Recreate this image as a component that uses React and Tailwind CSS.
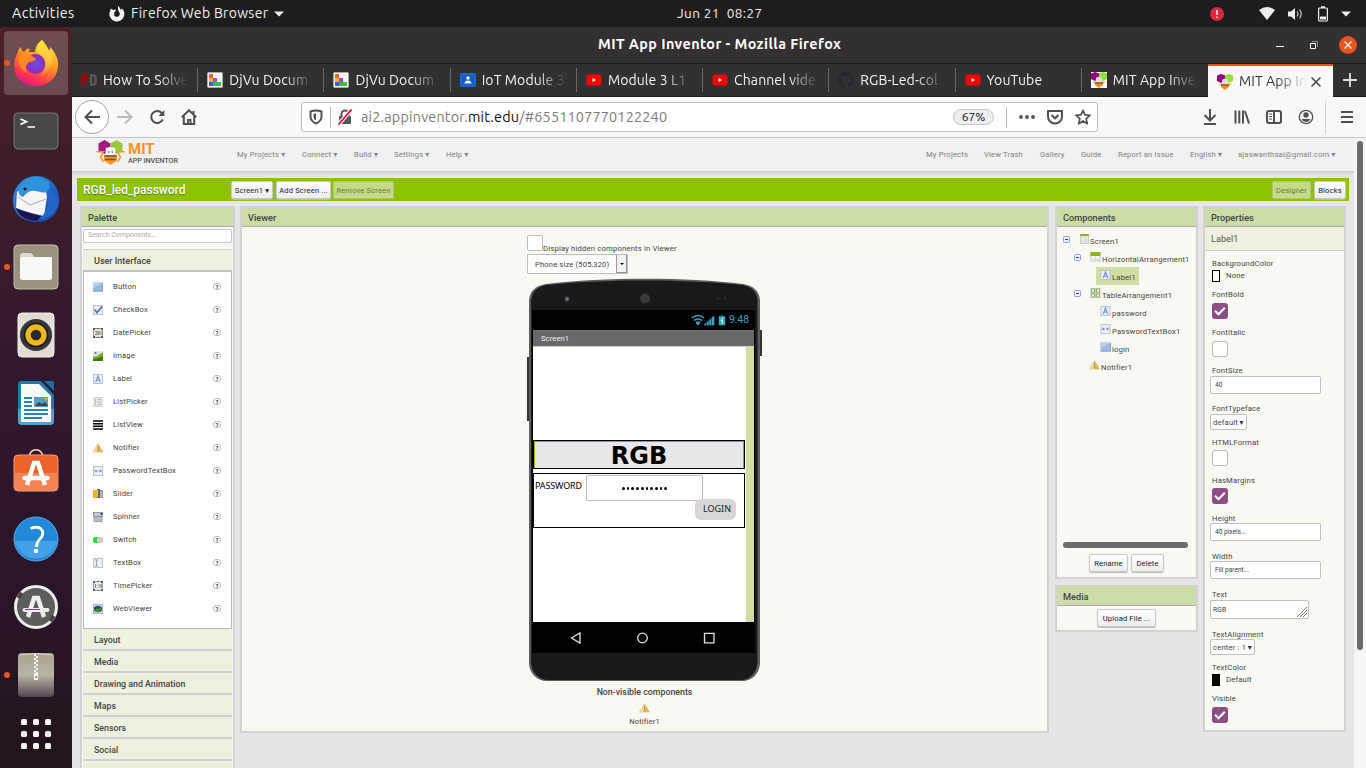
import React from "react";

const menuL = [["My Projects ▾", "w-[65px]"], ["Connect ▾", "w-[52px]"], ["Build ▾", "w-[40px]"], ["Settings ▾", "w-[52px]"], ["Help ▾", "w-[40px]"]];
const menuR = [["My Projects", "w-[58px]"], ["View Trash", "w-[56px]"], ["Gallery", "w-[41px]"], ["Guide", "w-[37px]"], ["Report an Issue", "w-[72px]"], ["English ▾", "w-[48px]"], ["ajaswanthsai@gmail.com ▾", "w-[111px]"]];

const tabs = [
  ["pd", "How To Solve"], ["dj", "DjVu Docum"], ["dj", "DjVu Docum"], ["iot", "IoT Module 3"], ["yt", "Module 3 L1"],
  ["yt", "Channel vide"], ["gh", "RGB-Led-col"], ["yt", "YouTube"], ["bee", "MIT App Inve"], ["bee", "MIT App In"],
];

const palette = ["Button", "CheckBox", "DatePicker", "Image", "Label", "ListPicker", "ListView", "Notifier", "PasswordTextBox", "Slider", "Spinner", "Switch", "TextBox", "TimePicker", "WebViewer"];
const categories = ["Layout", "Media", "Drawing and Animation", "Maps", "Sensors", "Social"];

function Bee({ className }) {
  return (
    <svg viewBox="0 0 28 25" className={className}>
      <path d="M2 3.500 8 0l6 3.500v7L8 14l-6-3.500z" fill="#a3177f" />
      <path d="M14 3.500 20 0l6 3.500v7L20 14l-6-3.500z" fill="#97c93d" />
      <path d="M0 11.800h7l-3 5.500 3 4.700M28 11.800h-7l3 5.500-3 4.700" fill="none" stroke="#f7931e" strokeWidth="1.500" />
      <circle cx="14" cy="12" r="5" fill="#fff" />
      <circle cx="10.500" cy="9" r="1.500" fill="#fff" />
      <circle cx="17.500" cy="9" r="1.500" fill="#fff" />
      <path d="M7.500 15h13v5.500L14 25l-6.500-4.500z" fill="#f7931e" />
      <path d="M8 16h12M8.500 19.500h11" stroke="#6b5a48" strokeWidth="1.500" />
      <circle cx="12.300" cy="12" r=".8" fill="#444" /><circle cx="15.700" cy="12" r=".8" fill="#444" />
    </svg>
  );
}

function TabIcon({ k }) {
  const c = "w-4 h-4 shrink-0";
  if (k === "bee") return (
    <svg className={c} viewBox="0 0 16 16">
      <path fill="#fff" d="M0 0h16v16H0z" />
      <path d="M0 1.500 4 0l4 1.500V7L4 9 0 7z" fill="#960082" /><path d="M8 1.500 12 0l4 1.500V7l-4 2-4-2z" fill="#8fe03c" />
      <path d="M1 9.500h14l-4 3H5z" fill="#f0a860" /><circle cx="8" cy="8" r="3.200" fill="#ddd" />
      <path d="M4 10h8v3l-4 3-4-3z" fill="#ff8c1a" /><path d="M4 11h8" stroke="#a86a38" strokeWidth="2" />
    </svg>
  );
  if (k === "yt") return (
    <svg className={c} viewBox="0 0 16 16"><rect x=".5" y="2.500" width="15" height="11" rx="2.500" fill="#f00" /><path d="M6.500 6v4l3.500-2z" fill="#fff" /></svg>
  );
  if (k === "dj") return (
    <svg className={c} viewBox="0 0 16 16">
      <rect x=".5" y=".5" width="15" height="15" rx="1" fill="#f4f4f4" stroke="#aaa" />
      <path d="M2 2h4v4H2z" fill="#f0672b" /><path d="M2 6h4v4H2z" fill="#f5b021" /><path d="M6 6h4v4H6z" fill="#c13bd0" />
      <path d="M2 10h4v4H2z" fill="#4455e0" /><path d="M6 10h4v4H6z" fill="#2fc04a" /><path d="M10 10h4v4h-4z" fill="#36c04e" /><path d="M10 6.500h0" />
    </svg>
  );
  if (k === "iot") return (
    <svg className={c} viewBox="0 0 16 16"><rect y="1" width="16" height="14" rx="1" fill="#1967d2" /><path d="M2.500 3h11v10h-11z" fill="#1b5cc0" /><circle cx="8" cy="6" r="1.700" fill="#fff" /><path d="M4.500 11.500c0-4 7-4 7 0z" fill="#fff" /></svg>
  );
  if (k === "gh") return (
    <svg className={c} viewBox="0 0 16 16"><path fill="#24292e" d="M8 0C3.580 0 0 3.580 0 8c0 3.540 2.290 6.530 5.470 7.590.4.070.55-.17.55-.38v-1.500c-2.200.5-2.700-1-2.700-1-.4-.9-.9-1.200-.9-1.200-.7-.5.1-.5.1-.5.800.1 1.200.800 1.200.800.700 1.300 1.900.900 2.300.700.1-.5.300-.900.5-1.100-1.800-.2-3.600-.900-3.600-4 0-.900.300-1.600.800-2.100-.1-.2-.4-1 .1-2.100 0 0 .700-.2 2.200.800a7.600 7.600 0 0 1 4 0c1.500-1 2.200-.800 2.200-.800.4 1.100.2 1.900.1 2.100.5.600.800 1.300.800 2.100 0 3.100-1.900 3.800-3.700 4 .3.200.6.700.6 1.500v2.200c0 .2.100.5.600.4A8 8 0 0 0 8 0z" /></svg>
  );
  return (
    <svg className={c} viewBox="0 0 16 16" fill="none">
      <path d="M1.800 14V3.500h2q2 0 2 2t-2 3h-2" stroke="#a80000" strokeWidth="2.800" />
      <path d="M10 12.500v-9h1.500q3 0 3 2v5q0 2-3 2z" stroke="#5c5858" strokeWidth="2.600" />
    </svg>
  );
}

function CompIcon({ k, className = "w-[10px] h-[10px]" }) {
  const frame = <rect x=".5" y=".5" width="9" height="9" fill="#eceff4" stroke="#bfc4cc" />;
  const shapes = {
    Button: <><rect y=".5" width="10" height="9" fill="#9dbbe2" /><path d="M0 .5h10L0 6z" fill="#bcd0ec" /><path d="M0 9h10V1" fill="none" stroke="#7d9cc6" /></>,
    CheckBox: <>{frame}<path d="M1.500 4.500 4 7.500 9 1.500" fill="none" stroke="#4f79bd" strokeWidth="1.900" /></>,
    DatePicker: <><rect x=".5" y=".5" width="9" height="9" fill="#e8e2dc" stroke="#9a938c" /><path d="M0 0h2v2H0zM8 0h2v2H8zM0 8h2v2H0zM8 8h2v2H8zM4 0h2v1H4zM4 9h2v1H4z" fill="#5f5953" /><path d="M2 3.500h2v3H2M5 3.500h1v3H5zM8 3v4" fill="none" stroke="#8a8580" /></>,
    Image: <><rect width="10" height="10" fill="#dfe6e0" /><path d="M0 6 4 5l6-4v9H0z" fill="#76b01c" /><path d="M0 8l5-1 5-2v5H0z" fill="#3f7c10" /><circle cx="2.500" cy="2" r="1" fill="#667" /></>,
    Label: <>{frame}<path d="M2.800 8 5 2l2.200 6M3.500 6h3" fill="none" stroke="#6f98da" strokeWidth="1.200" /></>,
    ListPicker: <><rect x="1" y=".5" width="8" height="9" fill="#eee" stroke="#ccc" /><path d="M2.500 2v6" stroke="#b9d77a" strokeWidth="1.300" /><path d="M4.500 2.500h3.500M4.500 5h3.500M4.500 7.500h3.500" stroke="#b0b0b0" /></>,
    ListView: <path d="M0 1h10M0 3.700h10M0 6.300h10M0 9h10" stroke="#000" strokeWidth="1.600" />,
    Notifier: <><path d="M5 .7 9.800 9H.2z" fill="#f0b34c" stroke="#c9a56a" strokeWidth=".6" /><path d="M5 .7 4 9H.2z" fill="#ead9b4" /><path d="M5 3.500v3M5 7v1" stroke="#a87a24" strokeWidth=".8" /></>,
    PasswordTextBox: <>{frame}<path d="M1.500 5h3M5.700 5h3M3 3.700v2.600M7.200 3.700v2.600" stroke="#6a8fd0" /></>,
    Slider: <><path d="M0 1h4v8H0z" fill="#f4b400" /><path d="M4 0h3v9H4z" fill="#666" /><path d="M7 1h3v8H7z" fill="#999" /><path d="M4.500 1v7M8 2v6" stroke="#ddd" strokeWidth=".8" /></>,
    Spinner: <><rect x=".3" y=".5" width="9.400" height="3.800" fill="#c3c8d2" stroke="#6d7482" strokeWidth=".6" /><path d="M7 1h3L8.500 3.500z" fill="#1b3f8f" /><rect x="1" y="4.800" width="8" height="4.700" fill="#b9c0ca" stroke="#777" strokeWidth=".6" /></>,
    Switch: <><rect y="2" width="9" height="6" rx="2.500" fill="#0eea0e" /><circle cx="7" cy="5" r="3.200" fill="#ccc" /></>,
    TextBox: <>{frame}<path d="M2 2h3M2 8h3M3.500 2v6" stroke="#8f9cb4" strokeWidth=".9" /></>,
    TimePicker: <><rect x=".5" y=".5" width="9" height="9" fill="#e6eaec" stroke="#9aa0a4" /><path d="M0 0h2v2H0zM8 0h2v2H8zM0 8h2v2H0zM8 8h2v2H8zM4 0h2v1H4zM4 9h2v1H4z" fill="#5f656a" /><path d="M2.500 3v4M5 3.500v1M5 6v1M7 3v4M8.500 3.500v3" stroke="#7b868e" /></>,
    WebViewer: <><rect x=".5" y=".5" width="9" height="9" fill="#cfe0f2" stroke="#9db6d2" /><ellipse cx="5" cy="5" rx="4" ry="3.200" fill="#1f4a7a" /><path d="M2 6c2-3 4 1 6-3 1 3-2 5.500-4 5z" fill="#3f9a1d" /></>,
    Screen: <><rect x="1" y=".5" width="8" height="9" fill="#e4e4e4" stroke="#bbb" strokeWidth=".7" /><path d="M.7 0h8.600v2H.7z" fill="#8eb021" /></>,
    Horiz: <><rect y=".5" width="10" height="9" fill="#ddd" stroke="#ccc" strokeWidth=".5" /><path d="M0 0h10v4H0z" fill="#8bb41d" /><path d="M1.500 4h2.600v2.500H1.500zM5.800 4h2.600v2.500H5.800z" fill="#fff" /></>,
    Table: <><path d="M0 0h10v10H0z" fill="#c9cdbd" /><g fill="#fff" stroke="#93aa55" strokeWidth=".9"><path d="M1 1h3v3H1zM6 1h3v3H6zM1 6h3v3H1zM6 6h3v3H6z" /></g></>,
  };
  return <svg viewBox="0 0 10 10" className={className + " shrink-0"}>{shapes[k]}</svg>;
}

function Dot() { return <i className="absolute left-[4px] top-[29px] w-[6px] h-[6px] rounded-full bg-[#e95420]" />; }
function DockItem({ active, dot, children }) {
  return (
    <div className={"relative w-[72px] h-[68px] flex justify-center pt-[2px] shrink-0"}>
      {active && <i className="absolute left-[4px] top-0 w-[64px] h-[64px] rounded bg-white/20" />}
      {dot && <Dot />}
      <svg viewBox="0 0 48 48" className="relative w-[48px] h-[48px] mt-[6px]">{children}</svg>
    </div>
  );
}

function Dock() {
  return (
    <nav className="w-[72px] shrink-0 h-full flex flex-col pt-[4px] bg-[linear-gradient(#4a2124,#3c1d2b_20%,#32182f_45%,#2a152a_75%,#22141c)]">
      <DockItem active dot>
        <defs>
          <linearGradient id="fx" x1=".8" y1="0" x2=".3" y2="1"><stop offset="0" stopColor="#fff14a" /><stop offset=".45" stopColor="#ff9420" /><stop offset=".8" stopColor="#ff3650" /><stop offset="1" stopColor="#e0158c" /></linearGradient>
          <linearGradient id="fy" x1="0" y1="0" x2="0" y2="1"><stop offset="0" stopColor="#ffe83a" /><stop offset=".6" stopColor="#ffc43a" /><stop offset="1" stopColor="#ff7a35" /></linearGradient>
          <radialGradient id="fp"><stop offset="0" stopColor="#6a50e8" /><stop offset="1" stopColor="#9128b8" /></radialGradient>
          <linearGradient id="tb" x1="0" y1="0" x2="1" y2="1"><stop offset="0" stopColor="#2a8fe0" /><stop offset=".6" stopColor="#1c62c4" /><stop offset="1" stopColor="#1a3f9a" /></linearGradient>
          <linearGradient id="zp" x1="0" y1="0" x2="0" y2="1"><stop offset="0" stopColor="#aaa392" /><stop offset=".5" stopColor="#bab5a5" /><stop offset="1" stopColor="#55474f" /></linearGradient>
        </defs>
        <path d="M30 1c3 3 6 7 7 11 1-1 1-3 1-4 6 6 9 14 8 20-1 12-11 19-22 19C10 47 2 38 2 26c0-5 2-9 4-13 0-2 1-4 3-5 0 2 1 4 3 5 3-4 7-5 5 0l6 0c0-5 3-9 7-12z" fill="url(#fx)" />
        <circle cx="23.500" cy="25" r="10" fill="url(#fp)" />
        <path d="M30 1c-5 4-7 9-4 13 8 4 10 13 3 22 8-2 13-10 11-18-1-8-8-10-10-17z" fill="url(#fy)" />
        <path d="M7 18c5-3 10-3 13-1l4 3c-2 3-6 2-8 4-3 3-3 7-1 10-6-3-10-10-8-16z" fill="#ff8a22" />
      </DockItem>
      <DockItem>
        <rect x="2" y="6" width="44" height="36" rx="4" fill="#484848" stroke="#777" strokeWidth="1" />
        <path d="M8.500 12l6 2.700-6 2.700M15.500 20h7.500" fill="none" stroke="#fff" strokeWidth="1.700" />
      </DockItem>
      <DockItem>
        <path d="M10 6C18-1 34-1 42 9c8 10 7 26-3 34-3 2-8 4-13 4C10 47 0 38 1 24c0-5 2-10 5-14z" fill="url(#tb)" />
        <path d="M5 17l7-5 22 4 1 6-3 19C20 38 10 36 4 33z" fill="#f6f5f8" /><path d="M6 22l12 8 16-6" fill="none" stroke="#aaa" strokeWidth="1" />
        <path d="M7 13c4-10 17-15 27-8 5 3 4 8 1 12-6 2-10-2-16-1-4 1-6 4-8 6-4-1-5-4-4-9z" fill="#2f92dc" />
        <path d="M4 33c10 4 17 6 25 8l-4 5C14 46 7 41 4 33z" fill="#20124f" />
        <path d="M34 14c5 9 3 20-6 30 10 0 20-9 18-21z" fill="#2366c8" /><circle cx="13" cy="14" r="1.500" fill="#112" />
      </DockItem>
      <DockItem dot>
        <rect x="2" y="2" width="44" height="44" rx="4" fill="#9a917f" stroke="#c6bfb0" />
        <path d="M8 13q0-3 3-3h7q2 0 3 2l1 2h18v20H8z" fill="#dcd7cc" /><rect x="8" y="14" width="32" height="23" rx="2.500" fill="#f8f8f7" />
      </DockItem>
      <DockItem>
        <rect x="6" y="2" width="36" height="44" rx="4" fill="#e2ddd2" stroke="#f3f0ea" />
        <circle cx="24" cy="24" r="16" fill="#35373c" /><circle cx="24" cy="24" r="11.500" fill="#edb81e" stroke="#15161a" strokeWidth="1.500" /><circle cx="24" cy="24" r="5.300" fill="#2a2a2a" />
      </DockItem>
      <DockItem>
        <path d="M9 2h20l13 14v26q0 4-4 4H10q-4 0-4-4V5q0-3 3-3z" fill="#1f7bab" /><path d="M6 30h36v12q0 4-4 4H10q-4 0-4-4z" fill="#4aa5d0" />
        <path d="M9 5h18l12 12v26H9z" fill="#fafafa" /><path d="M32 2h10v10z" fill="#1c6e9c" />
        <path d="M12 19h8M12 23h8M12 27h8M12 31h24M12 35h24M12 39h18" stroke="#2684b4" strokeWidth="1.800" /><rect x="22" y="18" width="14" height="10" fill="#4a9fd0" /><path d="M23 27l4-4 3 2 3-2 3 4z" fill="#444" /><path d="M32 19h3v3z" fill="#f6c21c" />
      </DockItem>
      <DockItem>
        <path d="M17 11c0-11 14-11 14 0" fill="none" stroke="#f6dcae" strokeWidth="1.600" />
        <rect x="2" y="8" width="44" height="36" rx="4" fill="#ee622d" stroke="#f59a73" /><path d="M2.500 26h43v14q0 4-4 4h-35q-4 0-4-4z" fill="#f38455" />
        <path d="M15 38l7-22h4l7 22" fill="none" stroke="#fff" strokeWidth="4.500" /><path d="M12.500 31h23" stroke="#fff" strokeWidth="4.500" strokeLinecap="round" />
      </DockItem>
      <DockItem>
        <circle cx="24" cy="24" r="22" fill="#2288da" stroke="#58aae8" /><path d="M2.500 26h43a22 22 0 0 1-43 0z" fill="#42a1e8" />
        <path d="M18.500 13.500q6-2.500 10 0 4 3.500 1 8.500c-2 3-5 4-5 10" fill="none" stroke="#fff" strokeWidth="2.800" /><circle cx="24" cy="36" r="2.300" fill="#fff" />
      </DockItem>
      <DockItem>
        <circle cx="24" cy="24" r="20.500" fill="#5d5d5d" stroke="#eee" strokeWidth="3" /><path d="M6 15l4-5M38 38l4-5" stroke="#444" strokeWidth="4" />
        <path d="M16 34l6-19h4l6 19" fill="none" stroke="#eee" strokeWidth="4.500" /><path d="M12.500 27h23" stroke="#eee" strokeWidth="4" strokeLinecap="round" /><path d="M13 26.500h15" stroke="#8a3a7a" />
      </DockItem>
      <DockItem dot>
        <rect x="6" y="2" width="36" height="44" rx="4" fill="url(#zp)" /><path d="M7 4q17-3 34 0" fill="none" stroke="#d6d0c4" />
        <path d="M23 3v20M25 5v20" stroke="#f4f4f2" strokeWidth="2" strokeDasharray="2 2" /><path d="M22 22h4v7h-4z" fill="#f2f2ee" /><path d="M23.500 25h1.500v2h-1.500z" fill="#777" />
      </DockItem>
      <div className="grid grid-cols-3 gap-[6px] w-[30px] ml-[21px] mt-[8px]">
        {Array.from({ length: 9 }, (_, i) => <i key={i} className="w-[6px] h-[6px] rounded-[1.5px] bg-[#f3f3f2]" />)}
      </div>
    </nav>
  );
}

function TopBar() {
  return (
    <header className="h-[27px] shrink-0 bg-[#1d1d1d] text-[#f2f2f2] flex items-center text-[14.2px] leading-[27px]">
      <span className="ml-[12px] w-[97px] tracking-[0.45px]">Activities</span>
      <svg viewBox="0 0 16 16" className="w-[16px] h-[16px]"><path d="M9 0c2 1.500 2.500 3 2.500 4l1.500-1.500A7.500 7.500 0 1 1 1 5l1-2.500L4 4l3-.5L6 6H4.500c2 .5 0 2 .8 3.500 1.500 2.300 5 1.500 5.400-1C11 6 9 5 9 3z" fill="#f2f2f2" /></svg>
      <span className="ml-[6px] w-[138px] whitespace-nowrap text-[14px] tracking-[0.3px]">Firefox Web Browser</span>
      <svg viewBox="0 0 10 6" className="ml-[5px] w-[10px] h-[6px]"><path d="M0 .5h10L5 5.500z" fill="#eee" /></svg>
      <span className="ml-[393px] w-[90px] whitespace-pre text-[13.5px] tracking-[0.4px]">Jun 21  08:27</span>
      <svg viewBox="0 0 16 16" className="ml-[443px] w-[14px] h-[14px]"><circle cx="8" cy="8" r="8" fill="#df2540" /><path d="M8 3.500v5.500M8 10.800v1.700" stroke="#fff" strokeWidth="1.600" /></svg>
      <svg viewBox="0 0 16 13" className="ml-[35px] w-[16px] h-[13px]"><path d="M0 3Q8-3 16 3L8 13z" fill="#eee" /></svg>
      <svg viewBox="0 0 16 14" className="ml-[12px] w-[16px] h-[14px]"><path d="M1 4.500h3L8 1v12L4 9.500H1z" fill="#eee" /><path d="M10 4.500q2 2.500 0 5M12.500 2.500q3.500 4.500 0 9" fill="none" stroke="#ccc" strokeWidth="1.200" /></svg>
      <svg viewBox="0 0 10 16" className="ml-[15px] w-[10px] h-[16px]"><rect x=".6" y="2" width="8.800" height="13" rx="1" fill="none" stroke="#eee" strokeWidth="1.200" /><path d="M3 .3h4V2H3zM2 10.500h6v3H2z" fill="#eee" /></svg>
      <svg viewBox="0 0 10 6" className="ml-[13px] w-[10px] h-[6px]"><path d="M0 .5h10L5 5.500z" fill="#eee" /></svg>
    </header>
  );
}

function Toolbar() {
  const ic = "fill-none stroke-[#4f4f4f] stroke-2 shrink-0";
  return (
    <div className="h-[41px] shrink-0 bg-[#f8f8f8] border-b border-[#c4c4c4] flex items-center">
      <div className="ml-[3px] w-[34px] h-[34px] rounded-full border border-[#a6a6a6] bg-white flex items-center justify-center">
        <svg viewBox="0 0 16 16" className={"w-4 h-4 " + ic}><path d="M16 8H2M8 1.500 1.500 8 8 14.500" /></svg>
      </div>
      <svg viewBox="0 0 16 16" className="ml-[8px] w-4 h-4 fill-none stroke-[#bbb] stroke-2"><path d="M0 8h14M8 1.500 14.500 8 8 14.500" /></svg>
      <svg viewBox="0 0 16 16" className={"ml-[16px] w-4 h-4 " + ic}><path d="M13.700 10.500A6 6 0 1 1 12.600 3.800L14 5.500" /><path d="M15.300 1v6H9.500z" fill="#4f4f4f" stroke="none" /></svg>
      <svg viewBox="0 0 16 16" className={"ml-[16px] w-4 h-4 " + ic}><path d="M.8 8.300 8 1.300l7.200 7M2.800 7v8h10.400V7" /><path d="M7 15v-4h2.500v4" strokeWidth="1.800" /><path d="M12.500 2v3" /></svg>
      <div className="ml-[104px] w-[797px] h-[30px] rounded-[3px] border border-[#bcbcbc] bg-white flex items-center text-[14.2px]">
        <svg viewBox="0 0 14 16" className={"ml-[7px] w-[14px] h-[16px] " + ic}><path d="M1.500 2.500Q7 .5 12.500 2.500V8q-.5 4.500-5.500 6.500Q2 12.500 1.500 8z" /><path d="M7 4.500v7Q4.500 10 4.500 7.500v-2.500z" fill="#4f4f4f" stroke="none" /></svg>
        <i className="ml-[7px] w-px h-[21px] bg-[#bbb]" />
        <svg viewBox="0 0 16 16" className="ml-[6px] w-4 h-4 shrink-0"><rect x="2" y="7" width="12" height="8" rx="1" fill="#555" /><path d="M4.500 8V5a3.500 3.500 0 0 1 7 0v3" fill="none" stroke="#555" strokeWidth="2" /><path d="M1.500 15.500 14.500.5" stroke="#fff" strokeWidth="4" /><path d="M1.500 15.500 14.500.5" stroke="#ff0039" strokeWidth="1.800" /></svg>
        <span className="ml-[8px] mt-[2px] text-[#7a7a7a] text-[14.4px] tracking-[0.19px] whitespace-nowrap w-[592px]">ai2.appinventor.<span className="text-[#111]">mit.edu</span>/#6551107770122240</span>
        <span className="w-[41px] h-[16px] rounded-full border border-[#c6c6c6] bg-[#eee] text-[#111] text-[12px] leading-[14px] text-center shrink-0">67%</span>
        <i className="ml-[12px] w-px h-[21px] bg-[#bbb] shrink-0" />
        <svg viewBox="0 0 16 4" className="ml-[12px] w-4 h-1 shrink-0" fill="#4f4f4f"><circle cx="2" cy="2" r="1.900" /><circle cx="8" cy="2" r="1.900" /><circle cx="14" cy="2" r="1.900" /></svg>
        <svg viewBox="0 0 16 16" className={"ml-[12px] w-4 h-4 " + ic}><path d="M1 2h14v5.500a7 7 0 0 1-14 0z" strokeLinejoin="round" /><path d="M4.500 6 8 9.300 11.500 6" /></svg>
        <svg viewBox="0 0 16 16" className={"ml-[12px] w-4 h-4 " + ic}><path d="M8 1.300l2 4.600 5 .5-3.800 3.300 1.100 5L8 12.100l-4.300 2.600 1.100-5L1 6.400l5-.5z" strokeWidth="1.700" strokeLinejoin="round" /></svg>
      </div>
      <svg viewBox="0 0 14 16" className={"ml-[105px] w-[14px] h-[16px] " + ic}><path d="M7 0v11M1.500 6 7 11.500 12.500 6M1 15h12" /></svg>
      <svg viewBox="0 0 16 16" className={"ml-[17px] w-4 h-4 " + ic}><path d="M1.500 1.500v13M5.300 1.500v13M9 1.500v13M11 2l4 12.500" /></svg>
      <svg viewBox="0 0 16 16" className={"ml-[16px] w-4 h-4 " + ic}><rect x="1" y="2" width="14" height="12" rx="2" /><path d="M8 2v12" /><path d="M3 5h3M3 7.500h3M3 10h3" strokeWidth="1" /></svg>
      <svg viewBox="0 0 16 16" className={"ml-[16px] w-4 h-4 " + ic}><circle cx="8" cy="8" r="6.700" strokeWidth="1.300" /><circle cx="8" cy="6" r="2.700" fill="#4f4f4f" stroke="none" /><path d="M3.500 10h9Q11 13 8 13t-4.500-3z" fill="#4f4f4f" stroke="none" /></svg>
      <i className="ml-[11px] w-px h-[33px] bg-[#d2d2d2]" />
      <svg viewBox="0 0 12 12" className={"ml-[15px] w-3 h-3 " + ic}><path d="M0 1h12M0 6h12M0 11h12" /></svg>
    </div>
  );
}

function TitleBar() {
  return (
    <div className="h-[37px] shrink-0 bg-[#333031] border-b border-[#1c1b1b] flex items-center text-white">
      <span className="ml-[526px] w-[244px] whitespace-nowrap text-[14.4px] tracking-[0.4px] font-bold">MIT App Inventor - Mozilla Firefox</span>
      <i className="ml-[434px] mt-[3px] w-[8px] h-px bg-white" />
      <svg viewBox="0 0 8 8" className="ml-[26px] w-[8px] h-[8px]"><path d="M.5 2.500h5v5h-5z" fill="none" stroke="#fff" /><path d="M2 .5h5.500V6" fill="none" stroke="#aaa" strokeWidth=".8" /></svg>
      <svg viewBox="0 0 18 18" className="ml-[21px] w-[18px] h-[18px]"><circle cx="9" cy="9" r="9" fill="#e95420" /><path d="M5.500 5.500l7 7M12.500 5.500l-7 7" stroke="#fff" strokeWidth="1.300" /></svg>
    </div>
  );
}

function Tabs() {
  return (
    <div className="h-[33px] shrink-0 bg-[#333031] border-b border-[#1c1b1b] flex">
      {tabs.map(([k, t], i) => {
        const a = i === 9;
        return (
          <div key={i} className={"flex items-center pl-[9px] shrink-0 " + (a ? "w-[125px] h-[33px] bg-[#f8f8f8] border-t-2 border-[#e95420] text-[#333]" : "w-[126.22px] text-[#f4f4f4]")}>
            <TabIcon k={k} />
            <span className={"ml-[6px] text-[14px] tracking-[0.1px] overflow-hidden whitespace-nowrap " + (a ? "w-[68px] mask-[linear-gradient(90deg,#000_55%,transparent)]" : "w-[86px] mask-[linear-gradient(90deg,#000_65%,transparent_98%)]")}>{t}</span>
            {a && <svg viewBox="0 0 10 10" className="ml-[4px] w-[10px] h-[10px]"><path d="M.5.5l9 9M9.500.5l-9 9" stroke="#444" strokeWidth="1.500" /></svg>}
            {!a && i !== 8 && <i className="ml-auto w-px h-[24px] bg-[#6a6868]" />}
          </div>
        );
      })}
      <svg viewBox="0 0 14 14" className="ml-[10px] mt-[9px] w-[14px] h-[14px]"><path d="M7 0v14M0 7h14" stroke="#ddd" strokeWidth="1.800" /></svg>
    </div>
  );
}

function PanelHead({ children }) {
  return <div className="h-[20px] shrink-0 bg-[#ccdca8] border-b border-[#acacac] pl-[6px] text-[9.2px] leading-[21px] font-medium text-[#444]">{children}</div>;
}

function Btn({ children, className = "", off }) {
  return <span className={"h-[18px] rounded-[2px] border text-[7.6px] tracking-[0.14px] leading-[17px] text-center whitespace-nowrap " + (off ? "bg-[#c4d98a] border-[#b0c876] text-[#667f30] " : "bg-linear-to-b from-white to-[#ececec] border-[#c9c9c9] text-[#222] shadow-[0_1px_1px_#bbb] ") + className}>{children}</span>;
}

function Palette() {
  return (
    <section className="w-[155px] h-[563px] border-x-2 border-t border-[#d2d2d2] bg-[#f8f9f2] overflow-hidden">
      <PanelHead>Palette</PanelHead>
      <div className="mx-px mt-[2px] h-[14px] rounded-[2px] border border-[#c6c6c6] bg-white pl-[4px] text-[7px] leading-[11px] text-[#aaa]">Search Components...</div>
      <div className="mx-px mt-[6px] h-[23px] border-t border-b-2 border-t-[#ccc] border-b-[#c3c3c3] bg-[#edf2df] pl-[11px] text-[9px] leading-[23px] font-medium text-[#444]">User Interface</div>
      <div className="mx-px h-[357px] border-x border-b border-[#b8b8b8] bg-white pt-[3px]">
        {palette.map((p) => (
          <div key={p} className="h-[23px] flex items-center pl-[9px] pr-[10px] text-[7.6px] tracking-[0.15px] text-[#444]">
            <CompIcon k={p} />
            <span className="ml-[10px] grow pt-px">{p}</span>
            <span className="w-[8px] h-[7px] rounded-[3px] border border-[#bbb] text-[6px] leading-[6px] text-[#333] font-bold text-center">?</span>
          </div>
        ))}
      </div>
      {categories.map((c) => (
        <div key={c} className="mx-px h-[22px] border-b-2 border-[#d0d0d0] bg-[#edf2df] pl-[11px] text-[8.8px] leading-[22px] font-medium text-[#444]">{c}</div>
      ))}
      <div className="mx-px h-[22px] bg-[#edf2df]" />
    </section>
  );
}

function Phone() {
  return (
    <div className="relative w-[236px] h-[404px] ml-[285px] mt-[4px] pl-[5px] pt-[32px]">
      <svg viewBox="0 0 236 404" className="absolute left-0 top-0 w-[236px] h-[404px]">
        <path d="M0 79h4v64H0zM231 52h4v26h-4z" fill="#333" />
        <path d="M2 22C3 13 8 8 19 6 76-1 160-1 216 6c11 2 16 7 17 16v364c-1 10-8 17-18 17H20c-10 0-17-7-18-17z" fill="#5b5d60" />
        <path d="M4 22C5.500 14 9.500 9 19.500 7c57-6 138-6 196 0 10 2 14 7 15 15v363c-1 10-8 17-16 17H21c-9 0-16-7-17-17z" fill="#191919" />
        <circle cx="118" cy="20.500" r="5" fill="#3b3b3b" /><circle cx="40" cy="21" r="2.700" fill="#444" /><circle cx="40" cy="21" r="1.200" fill="#857bb0" /><circle cx="191" cy="20" r="1.500" fill="#292929" /><circle cx="198" cy="20" r="1.500" fill="#292929" />
      </svg>
      <div className="relative w-[223px] h-[343px] bg-black flex flex-col">
        <div className="h-[20px] flex items-center justify-end pr-[5px] text-[#38a3c9]">
          <svg viewBox="0 0 36 12" className="w-[36px] h-[12px]" fill="none" stroke="#38a3c9"><path d="M1 4q6-5 12 0M3 6.500q4-3 8 0M5 8.700q2-1.500 4 0" strokeWidth="1.600" /><path d="M7 11l-1.500-2h3z" fill="#38a3c9" /><path d="M13 11l10-9v9zM28 2.500h6V11h-6zM30 1h2" fill="#38a3c9" strokeWidth=".6" /><path d="M15.500 7v4M18 5v6M20.500 3v8" stroke="#062633" strokeWidth=".6" /><path d="M32 3.500 30 7h2l-1 3" stroke="#fff" strokeWidth=".9" /></svg>
          <span className="ml-[2px] w-[21px] text-[10.4px] leading-[18px] font-['Roboto'] whitespace-nowrap">9:48</span>
        </div>
        <div className="ml-px mr-px h-[17px] bg-[#696969] border-b border-[#ccc] pl-[8px] text-[7.6px] leading-[17px] tracking-[0.1px] text-[#eee]">Screen1</div>
        <div className="ml-px mr-px h-[275px] flex bg-[#d0dea4]">
          <div className="w-[213px] bg-white text-black font-['Noto_Sans']">
            <div className="mt-[93px] w-[212px] h-[29px] border border-black bg-[#e8e8e8]">
              <div className="h-full border border-b-0 border-[#8fb000] text-center text-[24px] leading-[29px] font-bold font-['DejaVu_Sans']">RGB</div>
            </div>
            <div className="mt-[4px] w-[212px] h-[55px] border border-black">
              <div className="flex">
                <span className="w-[52px] pl-px mt-[5px] text-[9px] leading-[14px] tracking-[-0.15px]">PASSWORD</span>
                <div className="mt-[1px] w-[117px] h-[26px] border border-[#bbb] rounded-[2px] flex items-center justify-center gap-[2px]">
                  {Array.from({ length: 10 }, (_, i) => <i key={i} className="w-[2.7px] h-[2.7px] mt-px rounded-full bg-black" />)}
                </div>
              </div>
              <div className="relative ml-[161px] -mt-[2px] w-[41px] h-[21px] rounded-[6px] bg-[#d6d7d6] pl-[3px] text-center text-[9px] leading-[20px] text-[#222]">LOGIN</div>
            </div>
          </div>
        </div>
        <svg viewBox="0 0 222 31" className="w-[222px] h-[31px]" fill="none" stroke="#e4e4e4" strokeWidth="1.300"><path d="M39.500 16l8.500-5v10z" /><circle cx="110.500" cy="16" r="4.800" /><path d="M172.500 11.300h9.500v9.500h-9.500z" /></svg>
      </div>
    </div>
  );
}

function Viewer() {
  return (
    <section className="ml-[5px] w-[809px] h-[527px] border-x-2 border-b-2 border-t border-[#d2d2d2] bg-[#f8f9f2]">
      <PanelHead>Viewer</PanelHead>
      <div className="ml-[285px] mt-[8px] flex h-[16px]">
        <i className="w-[16px] h-[16px] rounded-[2px] border border-[#bbb] bg-white" />
        <span className="mt-[8px] text-[7.7px] leading-[11px] tracking-[0.17px] text-[#444] whitespace-nowrap">Display hidden components in Viewer</span>
      </div>
      <div className="ml-[285px] mt-[3px] flex w-[101px] h-[20px] border border-[#bdbdbd] rounded-[1px] bg-white text-[7.6px] tracking-[0.16px] leading-[19px] text-[#444]">
        <span className="pl-[7px] w-[88px]">Phone size (505,320)</span>
        <span className="w-[11px] bg-[#f2f2f2] border-l border-r border-b border-[#999] flex items-center justify-center"><svg viewBox="0 0 4 2" className="w-[4px] h-[2px]"><path d="M0 0h4L2 2z" /></svg></span>
      </div>
      <Phone />
      <div className="text-center mt-[4px] text-[8.8px] leading-[12px] font-medium text-[#444]">Non-visible components</div>
      <div className="flex flex-col items-center mt-[5px] text-[7.6px] leading-[11px] tracking-[0.14px] text-[#444]"><CompIcon k="Notifier" className="w-[11px] h-[10px]" /><span className="mt-[3px]">Notifier1</span></div>
    </section>
  );
}

const tree = [
  ["Screen", "Screen1", "pl-[6px]", 1], ["Horiz", "HorizontalArrangement1", "pl-[17px]", 1], ["Label", "Label1", "pl-[39px]", 0, 1],
  ["Table", "TableArrangement1", "pl-[17px]", 1], ["Label", "password", "pl-[39px]"], ["PasswordTextBox", "PasswordTextBox1", "pl-[39px]"],
  ["Button", "login", "pl-[39px]"], ["Notifier", "Notifier1", "pl-[32px]"],
];

function Components() {
  return (
    <div className="ml-[6px] w-[143px]">
      <section className="h-[373px] border-x-2 border-b-2 border-t border-[#d2d2d2] bg-[#f8f9f2]">
        <PanelHead>Components</PanelHead>
        <div className="h-[314px] pt-[4px]">
          {tree.map(([k, t, pad, exp, sel], i) => (
            <div key={i} className={"flex h-[18px] " + pad}>
              {exp ? <svg viewBox="0 0 7 7" className={"mt-[5px] w-[7px] h-[7px] shrink-0 " + (i === 0 ? "mr-[9px]" : "mr-[9px]")}><rect x=".5" y=".5" width="6" height="6" rx="1" fill="#eef" stroke="#8f9ad8" /><path d="M2 3.500h3" stroke="#33a" /></svg> : null}
              <span className={"flex h-[18px] " + (sel ? "bg-[#d0dea4] pl-[4px] pr-[3px]" : exp || k === "Notifier" ? "" : "pl-[4px]")}>
                <CompIcon k={k} className="w-[11px] h-[10px] mt-[3px]" />
                <span className={(i === 0 ? "" : "ml-px") + " mt-[5px] text-[7.7px] leading-[11px] tracking-[0.16px] text-[#444] whitespace-nowrap"}>{t}</span>
              </span>
            </div>
          ))}
        </div>
        <div className="ml-[6px] w-[125px] h-[6px] rounded-full bg-[#6b6b6b] mt-[1px]" />
        <div className="flex justify-center gap-[3px] mt-[6px]"><Btn className="w-[39px]">Rename</Btn><Btn className="w-[33px]">Delete</Btn></div>
      </section>
      <section className="mt-[6px] h-[47px] border-x-2 border-b-2 border-t border-[#d2d2d2] bg-[#f8f9f2] flex flex-col">
        <PanelHead>Media</PanelHead>
        <Btn className="w-[59px] mt-[3px] self-center">Upload File ...</Btn>
      </section>
    </div>
  );
}

const swatch = (fill, t) => <div className="mt-px flex items-center h-[12px]"><i className={"w-[8px] h-[12px] border border-black " + fill} /><span className="ml-[6px]">{t}</span></div>;
const check = (on, mt) => (
  <div className={"w-[16px] h-[16px] rounded-[3px] " + mt + (on ? " bg-[#8f4d88]" : " bg-white border border-[#bbb]")}>
    {on && <svg viewBox="0 0 16 16" className="w-4 h-4"><path d="M3 7.800l3.500 3.500 6.300-6.600" fill="none" stroke="#fff" strokeWidth="2" /></svg>}
  </div>
);
const input = (t, mt = "") => <div className={"-ml-[2px] w-[111px] h-[18px] rounded-[2px] border border-[#c0c0c0] bg-white pl-[4px] text-[6.7px] leading-[17px] tracking-[-0.05px] " + mt}>{t}</div>;
const select = (t, w, mt = "") => <div className={"-ml-[2px] h-[16px] rounded-[2px] border border-[#c0c0c0] bg-white pl-[2px] leading-[15px] whitespace-nowrap " + w + " " + mt}>{t} <span className="-ml-[0.5px] text-[#333]">▾</span></div>;

const props = [
  ["BackgroundColor", "h-[31px]", swatch("bg-white", "None")],
  ["FontBold", "h-[38px]", check(true, "mt-[3px]")],
  ["FontItalic", "h-[38px]", check(false, "mt-[3px]")],
  ["FontSize", "h-[38px]", input("40")],
  ["FontTypeface", "h-[34px]", select("default", "w-[37px]")],
  ["HTMLFormat", "h-[38px]", check(false, "mt-[2px]")],
  ["HasMargins", "h-[38px]", check(true, "mt-[2px]")],
  ["Height", "h-[38px]", input("40 pixels...", "-mt-px")],
  ["Width", "h-[38px]", input("Fill parent...", "-mt-px")],
  ["Text", "h-[40px]", <div className="-ml-[2px] w-[99px] h-[19px] rounded-[2px] border border-[#c0c0c0] bg-white pl-[2px] text-[6.7px] leading-[18px] flex justify-between">RGB<svg viewBox="0 0 10 10" className="w-[10px] h-[10px] mt-[6px] mr-px" stroke="#666" strokeWidth=".9"><path d="M0 10 10 0M3 10l7-7M6 10l4-4" /></svg></div>],
  ["TextAlignment", "h-[33px]", select("center : 1", "w-[45px]", "-mt-px")],
  ["TextColor", "h-[31px]", swatch("bg-black", "Default")],
  ["Visible", "h-[38px]", check(true, "mt-[3px]")],
];

function Properties() {
  return (
    <section className="ml-[5px] w-[143px] h-[526px] border-x-2 border-b-2 border-t border-[#d2d2d2] bg-[#f8f9f2]">
      <PanelHead>Properties</PanelHead>
      <div className="h-[24px] bg-[#edf1de] border-b border-[#ccc] pl-[6px] text-[9px] leading-[24px] text-[#555] tracking-[0.1px]">Label1</div>
      <div className="pl-[7px] pt-[7px] text-[7.7px] tracking-[0.16px] text-[#444]">
        {props.map(([l, h, c]) => <div key={l} className={h}><div className="h-[11px] leading-[11px]">{l}</div>{c}</div>)}
      </div>
    </section>
  );
}

export default function App() {
  return (
    <div className="w-[1366px] h-[768px] overflow-hidden flex flex-col font-['Ubuntu','Noto_Sans',sans-serif]">
      <TopBar />
      <div className="flex h-[741px]">
        <Dock />
        <div className="w-[1294px] flex flex-col">
          <TitleBar />
          <Tabs />
          <Toolbar />
          <div className="flex h-[630px] font-['Roboto','DejaVu_Sans',sans-serif]">
            <div className="w-[1282px] bg-[#e6e6e6] overflow-hidden">
              <div className="h-[34px] bg-[#f1f1f1] border-b border-[#cfcfcf] shadow-[0_1px_3px_#ccc] flex items-center pt-px text-[7.65px] tracking-[0.17px] text-[#808080] whitespace-nowrap">
                <Bee className="ml-[24px] mb-[5px] w-[29px] h-[25px]" />
                <div className="ml-[3px] w-[109px]">
                  <div className="text-[15px] leading-[13px] font-bold text-[#f7931e] tracking-[0]">MIT</div>
                  <div className="text-[7.3px] leading-[9px] mb-[3px] font-medium text-[#555] tracking-[-0.1px]">APP INVENTOR</div>
                </div>
                {menuL.map(([t, w]) => <span key={t} className={w + " shrink-0"}>{t}</span>)}
                <div className="flex ml-[440px]">{menuR.map(([t, w]) => <span key={t} className={w + " shrink-0"}>{t}</span>)}</div>
              </div>
              <div className="ml-[5px] mt-[6px] w-[1272px] h-[23px] bg-[#8fc202] flex items-center">
                <span className="ml-[6px] mt-px w-[148px] text-[12px] font-medium text-white [text-shadow:0_1px_1px_#5a7a00]">RGB_led_password</span>
                <Btn className="w-[42px]">Screen1 ▾</Btn>
                <Btn className="ml-[3px] w-[55px]">Add Screen ...</Btn>
                <Btn off className="ml-[2px] w-[61px]">Remove Screen</Btn>
                <Btn off className="ml-[878px] w-[39px]">Designer</Btn>
                <Btn className="ml-[3px] w-[32px]">Blocks</Btn>
              </div>
              <div className="ml-[8px] mt-[5px] flex items-start">
                <Palette /><Viewer /><Components /><Properties />
              </div>
            </div>
            <div className="w-[12px] bg-[#f6f6f6] pt-[3px] pl-[3px]"><div className="w-[6px] h-[509px] rounded-full bg-[#6c6c6c]" /></div>
          </div>
        </div>
      </div>
    </div>
  );
}
